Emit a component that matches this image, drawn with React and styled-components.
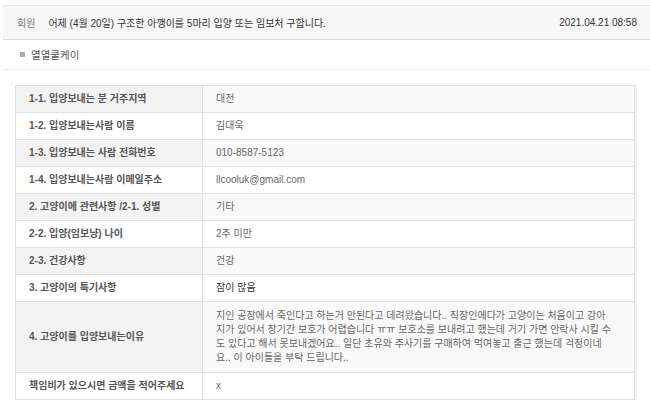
import React from "react";
import styled, { createGlobalStyle } from "styled-components";

const GlobalStyle = createGlobalStyle`
  body {
    margin: 0;
    background: #fff;
    font-family: "Liberation Sans", "Noto Sans CJK KR", sans-serif;
    font-feature-settings: "palt";
  }
`;

const Page = styled.div`
  padding: 5px 0 0 3px;
`;

const Header = styled.div`
  display: flex;
  align-items: center;
  height: 33px;
  padding: 0 13px 0 14px;
  background: #f7f7f7;
  border-top: 1px solid #e3e3e3;
  border-bottom: 1px solid #dcdcdc;
  font-size: 10px;
  color: #333;
`;

const Category = styled.span`
  color: #777;
  margin-right: 13px;
`;

const Title = styled.span`
  flex: 1;
`;

const DateText = styled.span`
  font-size: 10px;
`;

const Writer = styled.div`
  display: flex;
  align-items: center;
  height: 29px;
  padding-left: 17px;
  border-bottom: 1px solid #ececec;
  font-size: 10.5px;
  color: #555;

  &::before {
    content: "";
    width: 5px;
    height: 5px;
    margin-right: 6px;
    background: #aaa;
  }
`;

const TableWrap = styled.div`
  padding: 15px 0 0 12px;
`;

const Table = styled.table`
  width: 620px;
  border-collapse: collapse;
  border: 1px solid #e0e0e0;
  box-shadow: 2px 0 0 #f1f1f1;
  font-size: 10px;
  line-height: 14px;
`;

const Row = styled.tr`
  background: ${(p) => (p.$striped ? "#f9f9f9" : "#fff")};
`;

const Label = styled.th`
  width: 160px;
  padding: 6px 13px;
  text-align: left;
  font-weight: bold;
  color: #555;
  background: ${(p) => (p.$striped ? "#f3f3f3" : "#fff")};
  border: 1px solid #e0e0e0;
  vertical-align: middle;
`;

const Value = styled.td`
  padding: ${(p) => (p.$tall ? "7px 13px" : "6px 13px")};
  color: ${(p) => (p.$dark ? "#333" : "#666")};
  border: 1px solid #e0e0e0;
  vertical-align: middle;
`;

const rows = [
  { label: "1-1. 입양보내는 분 거주지역", value: "대전" },
  { label: "1-2. 입양보내는사람 이름", value: "김대욱" },
  { label: "1-3. 입양보내는 사람 전화번호", value: "010-8587-5123" },
  { label: "1-4. 입양보내는사람 이메일주소", value: "llcooluk@gmail.com" },
  { label: "2. 고양이에 관련사항 /2-1. 성별", value: "기타" },
  { label: "2-2. 입양(임보냥) 나이", value: "2주 미만" },
  { label: "2-3. 건강사항", value: "건강" },
  { label: "3. 고양이의 특기사항", value: "잠이 많음", dark: true },
  {
    label: "4. 고양이를 입양보내는이유",
    lines: [
      "지인 공장에서 죽인다고 하는거 안된다고 데려왔습니다.. 직장인에다가 고양이는 처음이고 강아",
      "지가 있어서 장기간 보호가 어렵습니다 ㅠㅠ 보호소를 보내려고 했는데 거기 가면 안락사 시킬 수",
      "도 있다고 해서 못보내겠어요.. 일단 초유와 주사기를 구매하여 먹여놓고 출근 했는데 걱정이네",
      "요.. 이 아이들을 부탁 드립니다..",
    ],
  },
  { label: "책임비가 있으시면 금액을 적어주세요", value: "x" },
];

export default function App() {
  return (
    <Page>
      <GlobalStyle />
      <Header>
        <Category>회원</Category>
        <Title>어제 (4월 20일) 구조한 아깽이를 5마리 입양 또는 임보처 구합니다.</Title>
        <DateText>2021.04.21 08:58</DateText>
      </Header>
      <Writer>열열쿨케이</Writer>
      <TableWrap>
        <Table>
          <tbody>
            {rows.map((row, i) => {
              const striped = i % 2 === 0;
              return (
                <Row key={i} $striped={striped}>
                  <Label $striped={striped}>{row.label}</Label>
                  <Value $dark={row.dark} $tall={!!row.lines}>
                    {row.lines
                      ? row.lines.map((line, j) => (
                          <React.Fragment key={j}>
                            {line}
                            {j < row.lines.length - 1 && <br />}
                          </React.Fragment>
                        ))
                      : row.value}
                  </Value>
                </Row>
              );
            })}
          </tbody>
        </Table>
      </TableWrap>
    </Page>
  );
}
